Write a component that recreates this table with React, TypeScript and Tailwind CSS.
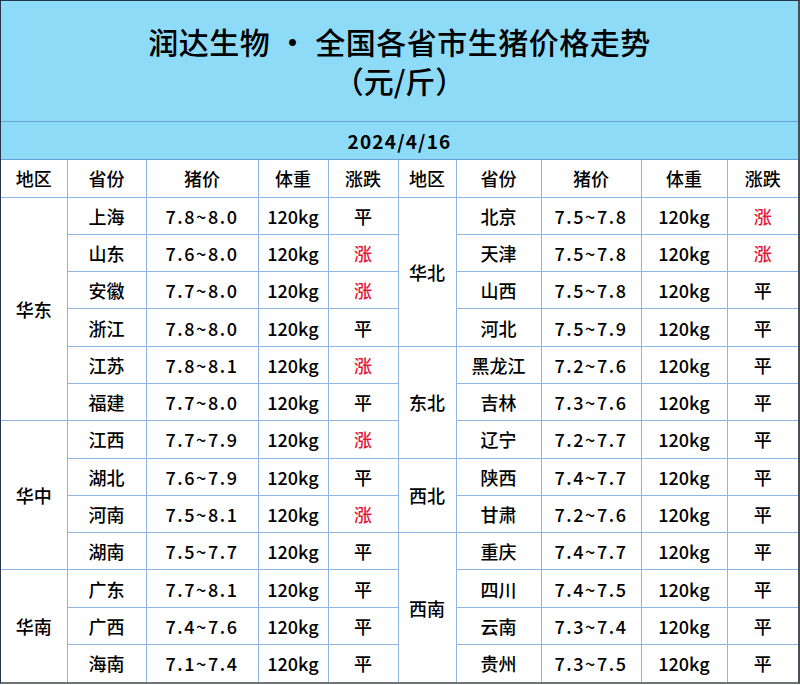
type Row = [string, string, string];
type Group = { region: string; rows: Row[] };

const left: Group[] = [
  {
    region: '华东',
    rows: [
      ['上海', '7.8~8.0', '平'],
      ['山东', '7.6~8.0', '涨'],
      ['安徽', '7.7~8.0', '涨'],
      ['浙江', '7.8~8.0', '平'],
      ['江苏', '7.8~8.1', '涨'],
      ['福建', '7.7~8.0', '平'],
    ],
  },
  {
    region: '华中',
    rows: [
      ['江西', '7.7~7.9', '涨'],
      ['湖北', '7.6~7.9', '平'],
      ['河南', '7.5~8.1', '涨'],
      ['湖南', '7.5~7.7', '平'],
    ],
  },
  {
    region: '华南',
    rows: [
      ['广东', '7.7~8.1', '平'],
      ['广西', '7.4~7.6', '平'],
      ['海南', '7.1~7.4', '平'],
    ],
  },
];

const right: Group[] = [
  {
    region: '华北',
    rows: [
      ['北京', '7.5~7.8', '涨'],
      ['天津', '7.5~7.8', '涨'],
      ['山西', '7.5~7.8', '平'],
      ['河北', '7.5~7.9', '平'],
    ],
  },
  {
    region: '东北',
    rows: [
      ['黑龙江', '7.2~7.6', '平'],
      ['吉林', '7.3~7.6', '平'],
      ['辽宁', '7.2~7.7', '平'],
    ],
  },
  {
    region: '西北',
    rows: [
      ['陕西', '7.4~7.7', '平'],
      ['甘肃', '7.2~7.6', '平'],
    ],
  },
  {
    region: '西南',
    rows: [
      ['重庆', '7.4~7.7', '平'],
      ['四川', '7.4~7.5', '平'],
      ['云南', '7.3~7.4', '平'],
      ['贵州', '7.3~7.5', '平'],
    ],
  },
];

type Flat = { region?: string; span: number; row: Row };

function flatten(groups: Group[]): Flat[] {
  const out: Flat[] = [];
  groups.forEach((g) => {
    g.rows.forEach((row, i) => {
      out.push({ region: i === 0 ? g.region : undefined, span: g.rows.length, row });
    });
  });
  return out;
}

const td = 'border border-[#8fb6e3] text-center align-middle';

function Cells({ item }: { item: Flat }) {
  const [prov, price, trend] = item.row;
  return (
    <>
      {item.region && (
        <td rowSpan={item.span} className={td}>
          {item.region}
        </td>
      )}
      <td className={td}>{prov}</td>
      <td className={`${td} tracking-[1.6px]`}>{price}</td>
      <td className={td}>120kg</td>
      <td className={`${td} ${trend === '涨' ? 'text-[#e4173d]' : ''}`}>{trend}</td>
    </>
  );
}

export default function App() {
  const l = flatten(left);
  const r = flatten(right);
  const heads = ['地区', '省份', '猪价', '体重', '涨跌', '地区', '省份', '猪价', '体重', '涨跌'];

  return (
    <div className="w-[800px] h-[685px] bg-white font-['Noto_Sans_CJK_SC',sans-serif] font-medium text-black">
      <div className="border-l border-t border-[#25354a] border-r-2 border-r-[#4a4f55] border-b-2 border-b-[#6f7378]">
        <table className="w-full table-fixed border-collapse border-hidden text-[18px] leading-none">
          <colgroup>
            <col className="w-[66px]" />
            <col className="w-[79px]" />
            <col className="w-[112px]" />
            <col className="w-[70px]" />
            <col className="w-[70px]" />
            <col className="w-[58px]" />
            <col className="w-[85px]" />
            <col className="w-[100px]" />
            <col className="w-[86px]" />
            <col className="w-[71px]" />
          </colgroup>
          <tbody>
            <tr className="h-[120px] bg-[#8edbf8]">
              <td colSpan={10} className="border-b border-[#6a9fd8] text-center [text-spacing-trim:space-all]">
                <div className="text-[30px] leading-[37px] tracking-[0.5px]">润达生物 · 全国各省市生猪价格走势</div>
                <div className="text-[30px] leading-[37px] mt-[2px]">（元/斤）</div>
              </td>
            </tr>
            <tr className="h-[38px] bg-[#8edbf8]">
              <td colSpan={10} className="border-b border-[#6a9fd8] text-center text-[19px] font-bold tracking-[1.2px]">
                2024/4/16
              </td>
            </tr>
            <tr className="h-[38px]">
              {heads.map((h, i) => (
                <td key={i} className={td}>
                  {h}
                </td>
              ))}
            </tr>
            {l.map((item, i) => (
              <tr key={i} className="h-[37.3px]">
                <Cells item={item} />
                <Cells item={r[i]} />
              </tr>
            ))}
          </tbody>
        </table>
      </div>
    </div>
  );
}
